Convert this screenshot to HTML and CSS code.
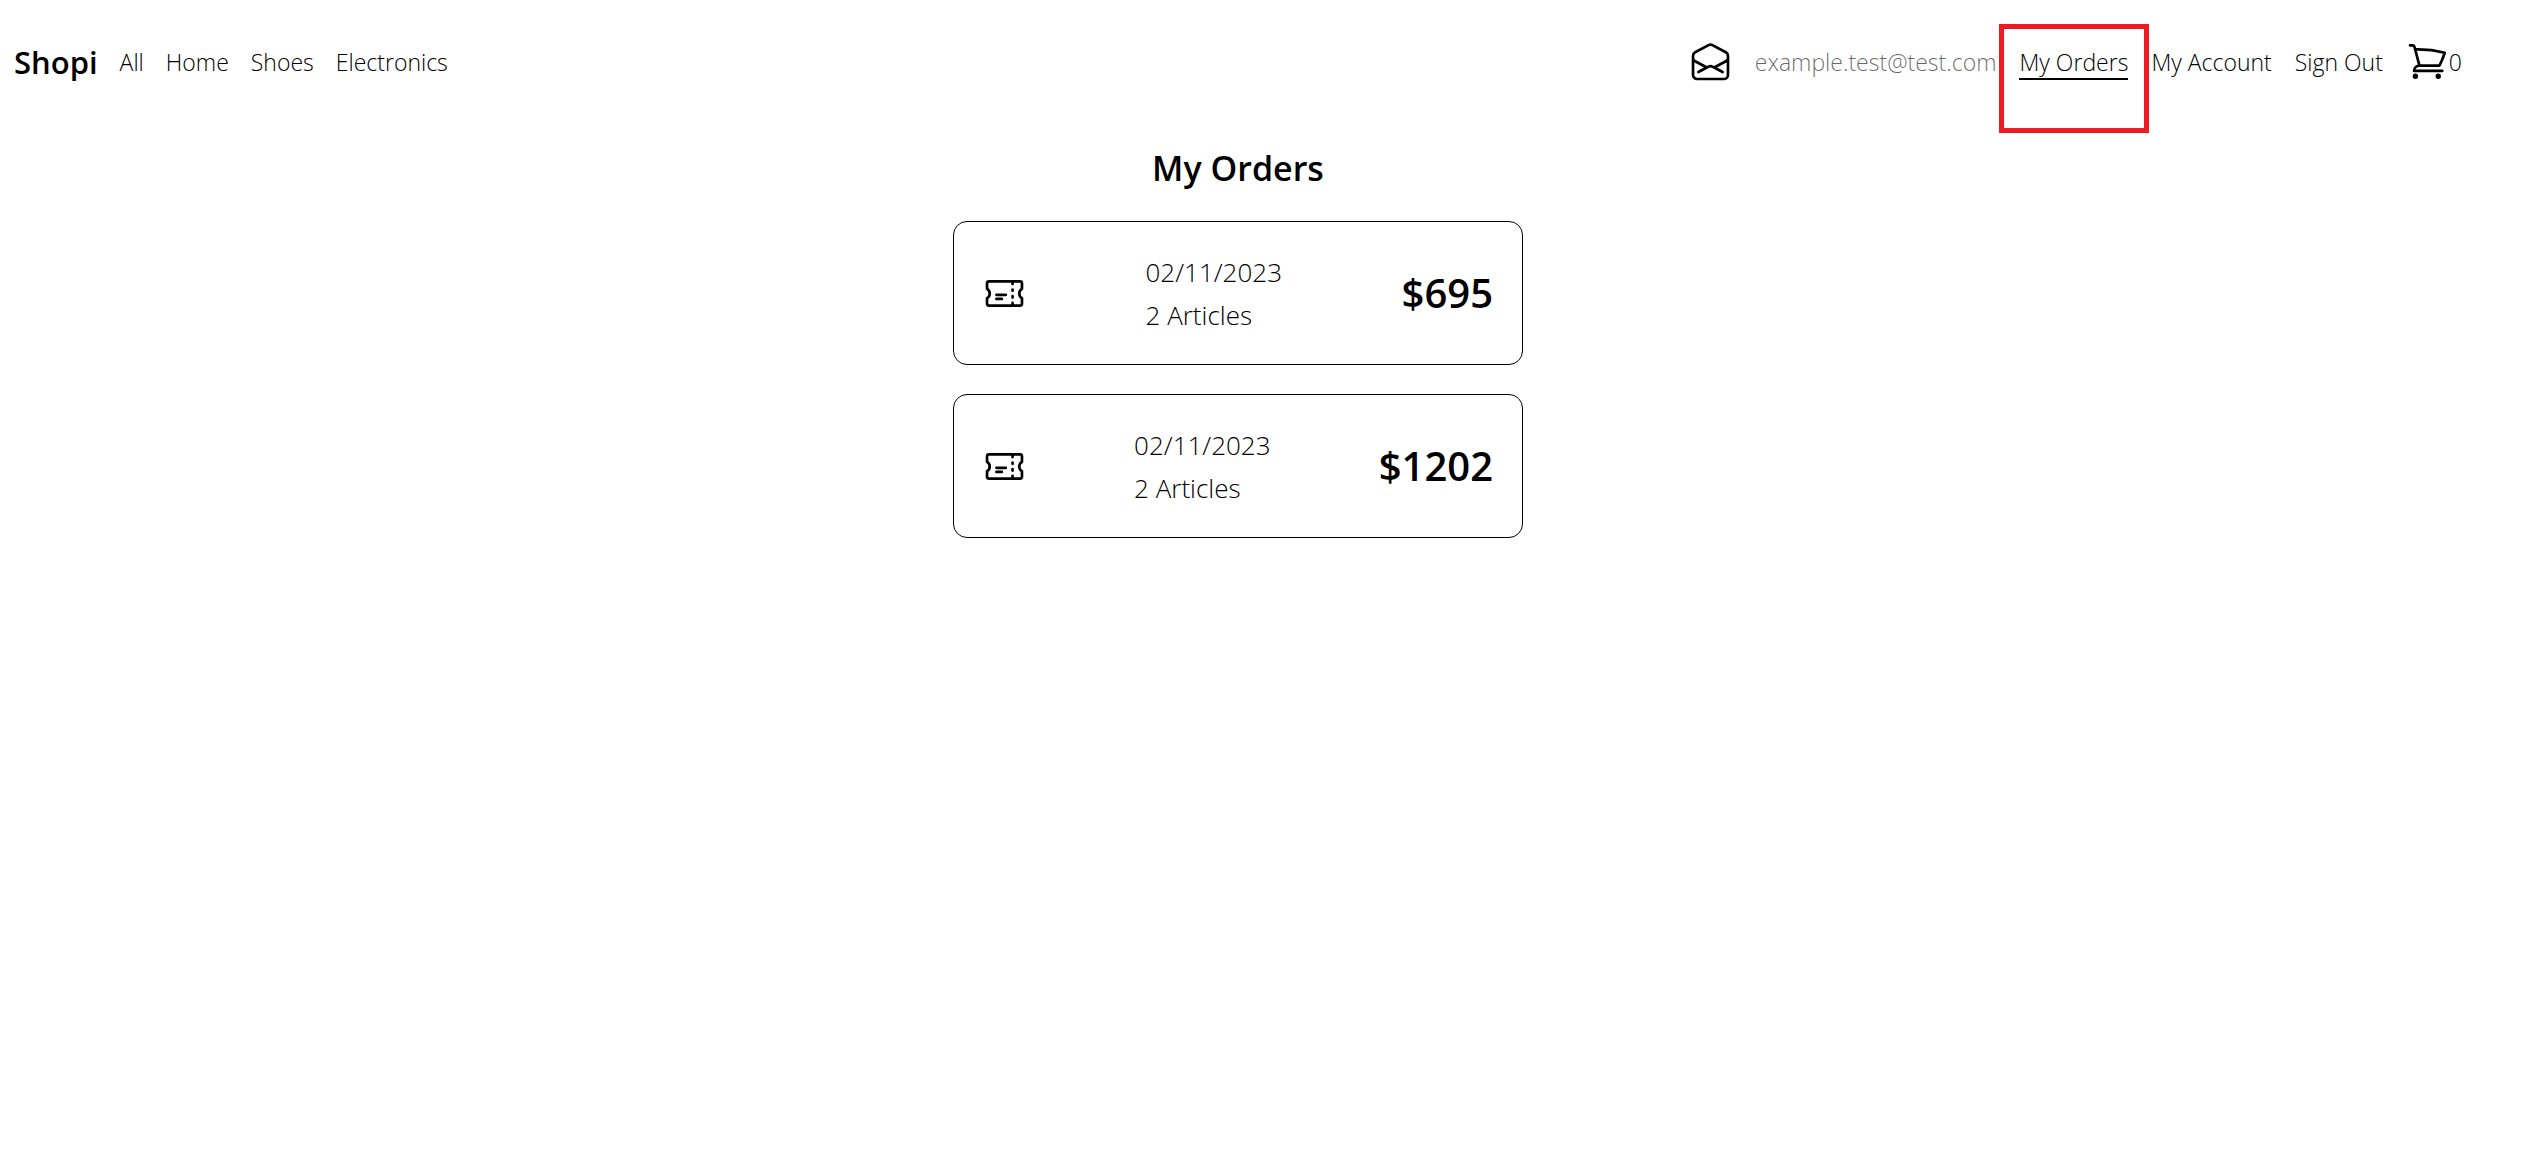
FILE: index.html
```html
<!DOCTYPE html>
<html lang="en">
<head>
<meta charset="utf-8">
<meta name="viewport" content="width=device-width, initial-scale=1">
<title>Shopi - My Orders</title>
<link rel="stylesheet" href="styles.css">
</head>
<body>
<nav class="navbar">
  <ul class="nav-list">
    <li><a class="nav-text brand" href="#">Shopi</a></li>
    <li><a class="nav-text" href="#">All</a></li>
    <li><a class="nav-text" href="#">Home</a></li>
    <li><a class="nav-text" href="#">Shoes</a></li>
    <li><a class="nav-text" href="#">Electronics</a></li>
  </ul>
  <ul class="nav-list account-list">
    <li><svg class="icon" viewBox="0 0 24 24" aria-hidden="true"><path d="M21.75 9v.906a2.25 2.25 0 01-1.183 1.981l-6.478 3.488M2.25 9v.906a2.25 2.25 0 001.183 1.981l6.478 3.488m8.839 2.51l-4.66-2.51m0 0l-1.023-.55a2.25 2.25 0 00-2.134 0l-1.022.55m0 0l-4.661 2.51m16.5 1.615a2.25 2.25 0 01-2.25 2.25h-15a2.25 2.25 0 01-2.25-2.25V8.844a2.25 2.25 0 011.183-1.98l7.5-4.04a2.25 2.25 0 012.134 0l7.5 4.04a2.25 2.25 0 011.183 1.98V19.5z"/></svg></li>
    <li class="nav-text email">example.test@test.com</li>
    <li class="highlight"><a class="nav-text active" href="#">My Orders</a></li>
    <li><a class="nav-text" href="#">My Account</a></li>
    <li><a class="nav-text" href="#">Sign Out</a></li>
    <li class="cart"><svg class="icon" viewBox="0 0 24 24" aria-hidden="true"><path d="M2.25 3h1.386c.51 0 .955.343 1.087.835l.383 1.437M7.5 14.25a3 3 0 00-3 3h15.75m-12.75-3h11.218c1.121-2.3 2.1-4.684 2.924-7.138a60.114 60.114 0 00-16.536-1.84M7.5 14.25L5.106 5.272M6 20.25a.75.75 0 11-1.5 0 .75.75 0 011.5 0zm12.75 0a.75.75 0 11-1.5 0 .75.75 0 011.5 0z"/></svg><span class="nav-text">0</span></li>
  </ul>
</nav>
<main class="orders">
  <h1>My Orders</h1>
  <a class="card" href="#">
    <svg class="icon" viewBox="0 0 24 24" aria-hidden="true"><path d="M16.5 6v.75m0 3v.75m0 3v.75m0 3V18m-9-5.25h5.25M7.5 15h3M3.375 5.25c-.621 0-1.125.504-1.125 1.125v3.026a2.999 2.999 0 010 5.198v3.026c0 .621.504 1.125 1.125 1.125h17.25c.621 0 1.125-.504 1.125-1.125v-3.026a2.999 2.999 0 010-5.198V6.375c0-.621-.504-1.125-1.125-1.125H3.375z"/></svg>
    <span class="details"><span>02/11/2023</span><span>2 Articles</span></span>
    <span class="price">$695</span>
  </a>
  <a class="card" href="#">
    <svg class="icon" viewBox="0 0 24 24" aria-hidden="true"><path d="M16.5 6v.75m0 3v.75m0 3v.75m0 3V18m-9-5.25h5.25M7.5 15h3M3.375 5.25c-.621 0-1.125.504-1.125 1.125v3.026a2.999 2.999 0 010 5.198v3.026c0 .621.504 1.125 1.125 1.125h17.25c.621 0 1.125-.504 1.125-1.125v-3.026a2.999 2.999 0 010-5.198V6.375c0-.621-.504-1.125-1.125-1.125H3.375z"/></svg>
    <span class="details"><span>02/11/2023</span><span>2 Articles</span></span>
    <span class="price">$1202</span>
  </a>
</main>
</body>
</html>
```
FILE: styles.css
```css
* {
  box-sizing: border-box;
}

body {
  margin: 0;
  padding-right: 49px;
  background: #fff;
  color: #000;
  font-family: "Segoe UI", "Open Sans", sans-serif;
  font-weight: 300;
}

a {
  color: inherit;
  text-decoration: none;
}

.navbar {
  display: flex;
  justify-content: space-between;
  align-items: center;
  padding: 36px 14px;
  font-size: 23px;
}

.nav-list {
  display: flex;
  align-items: center;
  gap: 22px;
  height: 50px;
  margin: 0;
  padding: 0;
  list-style: none;
}

.account-list {
  gap: 23px;
}

.nav-text {
  display: block;
  padding-top: 2px;
  line-height: 36px;
}

.brand {
  font-size: 31px;
  font-weight: 600;
}

.icon {
  display: block;
  width: 43px;
  height: 43px;
  fill: none;
  stroke: currentColor;
  stroke-width: 1.5;
  stroke-linecap: round;
  stroke-linejoin: round;
}

.email {
  color: rgba(0, 0, 0, 0.6);
}

.active {
  padding-top: 4px;
  line-height: 32px;
  border-bottom: 2px solid #000;
}

.highlight {
  position: relative;
}

/* Red frame around the current section */
.highlight::after {
  content: "";
  position: absolute;
  inset: -18px -21px -53px -20px;
  border: 5px solid #ed1c24;
  pointer-events: none;
}

.cart {
  display: flex;
  align-items: center;
}

.orders {
  display: flex;
  flex-direction: column;
  align-items: center;
  gap: 29px;
  padding: 22px 14px;
}

h1 {
  margin: 0;
  font-size: 34px;
  font-weight: 600;
  line-height: 48px;
}

.card {
  display: flex;
  justify-content: space-between;
  align-items: center;
  width: 100%;
  max-width: 570px;
  padding: 27px 29px;
  border: 1px solid #000;
  border-radius: 14px;
}

.details {
  display: flex;
  flex-direction: column;
  padding-top: 2px;
  font-size: 26px;
  line-height: 43px;
}

.price {
  font-size: 40px;
  font-weight: 600;
  line-height: 48px;
}
```
